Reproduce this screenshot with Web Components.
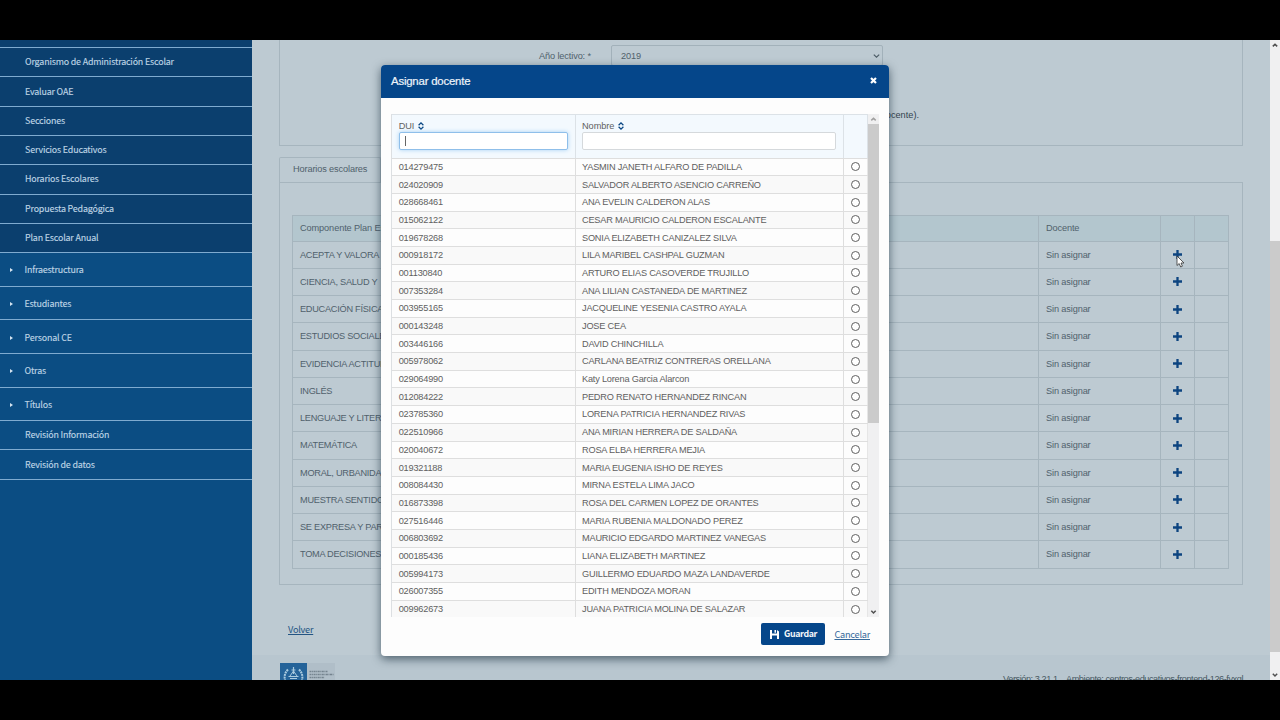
<!DOCTYPE html>
<html lang="es">
<head>
<meta charset="utf-8">
<title>Asignar docente</title>
<style>
  body {
    margin: 0;
    width: 1280px;
    height: 720px;
    background: #000;
    overflow: hidden;
    font-family: "Liberation Sans", Arial, sans-serif;
    font-size: 9.2px;
    --humanist: "Noto Sans CJK SC", "Noto Sans", sans-serif;
    --blue: #05468a;
    --line: #a6b5be;
  }
</style>
</head>
<body>
<school-app></school-app>
<script>
class SideItem extends HTMLElement {
  connectedCallback() {
    this.attachShadow({ mode: 'open' }).innerHTML = `
      <style>
        :host {
          display: flex;
          align-items: center;
          box-sizing: border-box;
          height: 29.3px;
          padding-left: 25px;
          border-bottom: 1px solid #7fabd0;
          color: #bdd3e3;
          background: #0b4d83;
          font: 8.9px/12px var(--humanist);
          letter-spacing: -.16px;
          -webkit-text-stroke: .15px #bdd3e3;
          white-space: nowrap;
        }
        :host([sub]) { background: #0b3f6e; }
        :host([parent]) { height: 33.6px; padding: 2px 0 0 10px; }
        i { display: none; }
        :host([parent]) i {
          display: block;
          width: 0;
          margin-right: 11.5px;
          border: 2.5px solid transparent;
          border-left: 3px solid #d5e4f0;
          border-right: 0;
        }
      </style>
      <i></i><slot></slot>
    `;
  }
}
customElements.define('side-item', SideItem);

class SideMenu extends HTMLElement {
  connectedCallback() {
    const sub = ['Organismo de Administración Escolar', 'Evaluar OAE', 'Secciones', 'Servicios Educativos',
      'Horarios Escolares', 'Propuesta Pedagógica', 'Plan Escolar Anual'];
    const parents = ['Infraestructura', 'Estudiantes', 'Personal CE', 'Otras', 'Títulos'];
    const last = ['Revisión Información', 'Revisión de datos'];
    this.attachShadow({ mode: 'open' }).innerHTML = `
      <style>
        :host { display: block; width: 252px; flex: none; background: #0b4d83; }
        .rest { height: 8.1px; box-sizing: border-box; background: #0b3f6e; border-bottom: 1px solid #7fabd0; }
      </style>
      <div class="rest"></div>
      ${sub.map(t => `<side-item sub>${t}</side-item>`).join('')}
      ${parents.map(t => `<side-item parent>${t}</side-item>`).join('')}
      ${last.map(t => `<side-item>${t}</side-item>`).join('')}
    `;
  }
}
customElements.define('side-menu', SideMenu);

// Vertical scrollbar; thumb geometry comes from custom properties
class ScrollBar extends HTMLElement {
  connectedCallback() {
    this.attachShadow({ mode: 'open' }).innerHTML = `
      <style>
        :host { display: flex; flex-direction: column; flex: none; background: #f0f0f1; color: #505050; }
        svg { display: block; width: 100%; height: 10px; flex: none; }
        .up { color: var(--up, #505050); }
        .thumb { margin-top: var(--thumb-top, 0); height: var(--thumb); background: #cbcbcb; }
        .space { flex: 1; }
      </style>
      <svg class="up" viewBox="0 0 10 10"><path d="M2.8 6.4 5 4.2l2.2 2.2" fill="none" stroke="currentColor" stroke-width="1.5"/></svg>
      <div class="thumb"></div>
      <div class="space"></div>
      <svg viewBox="0 0 10 10"><path d="M2.8 3.8 5 6l2.2-2.2" fill="none" stroke="currentColor" stroke-width="1.5"/></svg>
    `;
  }
}
customElements.define('scroll-bar', ScrollBar);

class FilterPanel extends HTMLElement {
  connectedCallback() {
    this.attachShadow({ mode: 'open' }).innerHTML = `
      <style>
        :host {
          display: block;
          box-sizing: border-box;
          height: 106px;
          padding-top: 5px;
          border: 1px solid var(--line);
          border-top: 0;
          color: #50616c;
        }
        .field { display: flex; align-items: center; margin-left: 259px; height: 21px; letter-spacing: -.12px; }
        label { width: 72px; }
        .select {
          display: flex;
          align-items: center;
          justify-content: space-between;
          box-sizing: border-box;
          width: 272px;
          height: 21px;
          padding: 0 2px 0 9px;
          border: 1px solid #a2b1ba;
          border-radius: 2px;
        }
        svg { width: 7px; height: 6px; }
        .note { margin-top: 43px; width: 639px; text-align: right; color: #33434e; line-height: 12px; }
      </style>
      <div class="field">
        <label>Año lectivo: *</label>
        <div class="select">2019
          <svg viewBox="0 0 7 6"><path d="M.8 1.6 3.5 4.2 6.2 1.6" fill="none" stroke="#4c5c66" stroke-width="1.2"/></svg>
        </div>
      </div>
      <div class="note">(docente).</div>
    `;
  }
}
customElements.define('filter-panel', FilterPanel);

class PlanTable extends HTMLElement {
  connectedCallback() {
    const names = ['ACEPTA Y VALORA', 'CIENCIA, SALUD Y', 'EDUCACIÓN FÍSICA', 'ESTUDIOS SOCIALES',
      'EVIDENCIA ACTITUD', 'INGLÉS', 'LENGUAJE Y LITERA', 'MATEMÁTICA', 'MORAL, URBANIDAD',
      'MUESTRA SENTIDO', 'SE EXPRESA Y PART', 'TOMA DECISIONES'];
    const plus = '<svg viewBox="0 0 9 9"><path d="M4.5 0v9M0 4.5h9" stroke="#0d4480" stroke-width="2.3"/></svg>';
    this.attachShadow({ mode: 'open' }).innerHTML = `
      <style>
        :host { display: block; border: 1px solid var(--line); border-bottom: 0; color: #50616c; letter-spacing: -.13px; }
        .row {
          display: grid;
          grid-template-columns: 746px 122px 34px 1fr;
          box-sizing: border-box;
          height: 27.25px;
          border-bottom: 1px solid var(--line);
        }
        .head { height: 25.6px; background: #b3c6ce; }
        span { display: flex; align-items: center; padding-left: 7px; border-right: 1px solid var(--line); white-space: nowrap; }
        span:first-child { letter-spacing: -.26px; }
        .head span:first-child { letter-spacing: -.1px; }
        span:nth-child(3) { padding: 0; justify-content: center; }
        span:last-child { border: 0; }
        svg { width: 9px; height: 9px; }
      </style>
      <div class="row head"><span>Componente Plan Estudio</span><span>Docente</span><span></span><span></span></div>
      ${names.map(n => `<div class="row"><span>${n}</span><span>Sin asignar</span><span>${plus}</span><span></span></div>`).join('')}
    `;
  }
}
customElements.define('plan-table', PlanTable);

class TabPanel extends HTMLElement {
  connectedCallback() {
    this.attachShadow({ mode: 'open' }).innerHTML = `
      <style>
        :host { display: block; margin-top: 11px; color: #50616c; }
        .tab {
          display: flex;
          align-items: center;
          box-sizing: border-box;
          width: 102px;
          height: 25px;
          padding: 0 0 2px 13px;
          border: 1px solid var(--line);
          border-bottom: 0;
          border-radius: 2px 2px 0 0;
          letter-spacing: -.13px;
        }
        .body {
          box-sizing: border-box;
          height: 403px;
          padding: 32px 13px 0 12px;
          border: 1px solid var(--line);
        }
      </style>
      <div class="tab">${this.getAttribute('label')}</div>
      <div class="body"><slot></slot></div>
    `;
  }
}
customElements.define('tab-panel', TabPanel);

class PageFooter extends HTMLElement {
  connectedCallback() {
    this.attachShadow({ mode: 'open' }).innerHTML = `
      <style>
        :host {
          display: flex;
          box-sizing: border-box;
          height: 60px;
          padding: 8px 27px 0 28px;
          background: #b8c6cf;
          color: #485963;
        }
        svg { width: 55px; height: 27px; flex: none; }
        .version { margin-left: auto; padding-top: 11px; letter-spacing: -.45px; line-height: 11px; white-space: pre; }
      </style>
      <svg viewBox="0 0 55 27">
        <path fill="#b0bec8" d="M27 0h28v27H27z"/>
        <path fill="#256399" d="M0 0h27v27H0z"/>
        <g fill="none" stroke="#a9cadf">
          <path d="M8 6.500Q2.500 12 6 20M19 6.500q5.500 5.500 2 13.500" stroke-width="2" stroke-dasharray="2 .7"/>
          <path d="M13.500 4v7M11.500 7h4M8.500 13.500h10M10 15.500h7" stroke-width="1.200"/>
          <path d="m10 13 3.500-5 3.500 5" />
        </g>
        <path d="M29.500 8.500h18M29.500 11.500h24M29.500 14.500h15" stroke="#74838e" stroke-width="1.300" stroke-dasharray="2 .6 1 .5"/>
      </svg>
      <div class="version">Versión: 3.21.1 _ Ambiente: centros-educativos-frontend-126-fvxgl</div>
    `;
  }
}
customElements.define('page-footer', PageFooter);

class TeacherList extends HTMLElement {
  connectedCallback() {
    const rows = [
      ['014279475', 'YASMIN JANETH ALFARO DE PADILLA'],
      ['024020909', 'SALVADOR ALBERTO ASENCIO CARREÑO'],
      ['028668461', 'ANA EVELIN CALDERON ALAS'],
      ['015062122', 'CESAR MAURICIO CALDERON ESCALANTE'],
      ['019678268', 'SONIA ELIZABETH CANIZALEZ SILVA'],
      ['000918172', 'LILA MARIBEL CASHPAL GUZMAN'],
      ['001130840', 'ARTURO ELIAS CASOVERDE TRUJILLO'],
      ['007353284', 'ANA LILIAN CASTANEDA DE MARTINEZ'],
      ['003955165', 'JACQUELINE YESENIA CASTRO AYALA'],
      ['000143248', 'JOSE CEA'],
      ['003446166', 'DAVID CHINCHILLA'],
      ['005978062', 'CARLANA BEATRIZ CONTRERAS ORELLANA'],
      ['029064990', 'Katy Lorena Garcia Alarcon'],
      ['012084222', 'PEDRO RENATO HERNANDEZ RINCAN'],
      ['023785360', 'LORENA PATRICIA HERNANDEZ RIVAS'],
      ['022510966', 'ANA MIRIAN HERRERA DE SALDAÑA'],
      ['020040672', 'ROSA ELBA HERRERA MEJIA'],
      ['019321188', 'MARIA EUGENIA ISHO DE REYES'],
      ['008084430', 'MIRNA ESTELA LIMA JACO'],
      ['016873398', 'ROSA DEL CARMEN LOPEZ DE ORANTES'],
      ['027516446', 'MARIA RUBENIA MALDONADO PEREZ'],
      ['006803692', 'MAURICIO EDGARDO MARTINEZ VANEGAS'],
      ['000185436', 'LIANA ELIZABETH MARTINEZ'],
      ['005994173', 'GUILLERMO EDUARDO MAZA LANDAVERDE'],
      ['026007355', 'EDITH MENDOZA MORAN'],
      ['009962673', 'JUANA PATRICIA MOLINA DE SALAZAR']
    ];
    const sort = '<svg viewBox="0 0 6 8"><path d="M.6 3.200 3 .9l2.400 2.300M.6 4.800 3 7.100l2.400-2.300" fill="none" stroke="#0d4a86" stroke-width="1.300"/></svg>';
    this.attachShadow({ mode: 'open' }).innerHTML = `
      <style>
        :host { display: flex; height: 503px; overflow: hidden; color: #606060; letter-spacing: -.2px; }
        .grid { flex: 1; border-left: 1px solid #dcdfe2; }
        .row {
          display: grid;
          grid-template-columns: 184px 268px 1fr;
          box-sizing: border-box;
          height: 17.7px;
          border-bottom: 1px solid #dedede;
        }
        .row:nth-child(odd) { background: #f9f9f9; }
        .row span { display: flex; align-items: center; padding: 0 7px 0 6.7px; border-right: 1px solid #dedede; white-space: nowrap; }
        .row span:nth-child(2) { padding-left: 6px; }
        .row span:last-child { padding: 0; justify-content: center; border-color: #e6e6e6; }
        .row.head { height: 44.5px; background: #f3f9fe; border-top: 1px solid #dce2e7; }
        .row.head span { flex-direction: column; align-items: stretch; justify-content: flex-start; padding-top: 6px; border-color: #dce2e7; }
        b { font-weight: normal; letter-spacing: -.05px; line-height: 11px; height: 11px; }
        svg { width: 6px; height: 8px; margin-left: 4px; vertical-align: -1px; }
        .input {
          box-sizing: border-box;
          height: 18px;
          padding: 3px 5px;
          border: 1px solid #d5d9dc;
          border-radius: 2px;
          background: #fff;
        }
        .input.focus { border-color: #8fbfea; box-shadow: 0 0 4px #a5d2f5; }
        .input.focus::before { content: ""; display: block; width: 1px; height: 10px; background: #666; }
        i { width: 7px; height: 7px; border: 1px solid #606060; border-radius: 50%; background: #fff; }
        scroll-bar { width: 11px; --thumb: 299px; --up: #a0a0a0; }
      </style>
      <div class="grid">
        <div class="row head">
          <span><b>DUI${sort}</b><div class="input focus"></div></span>
          <span><b>Nombre${sort}</b><div class="input"></div></span>
          <span></span>
        </div>
        ${rows.map(r => `<div class="row"><span>${r[0]}</span><span>${r[1]}</span><span><i></i></span></div>`).join('')}
      </div>
      <scroll-bar></scroll-bar>
    `;
  }
}
customElements.define('teacher-list', TeacherList);

class ModalDialog extends HTMLElement {
  connectedCallback() {
    this.attachShadow({ mode: 'open' }).innerHTML = `
      <style>
        :host {
          display: block;
          box-sizing: border-box;
          background: #fdfdfd;
          border-radius: 4px;
          overflow: hidden;
          box-shadow: 0 3px 10px rgba(20, 40, 55, .65);
        }
        header {
          display: flex;
          align-items: center;
          justify-content: space-between;
          box-sizing: border-box;
          height: 33px;
          padding: 0 12.5px 2px 10px;
          background: var(--blue);
          color: #eef4fa;
          font-size: 11.4px;
          letter-spacing: -.2px;
          -webkit-text-stroke: .2px #eef4fa;
        }
        header svg { width: 7px; height: 7px; }
        .content { padding: 16px 10px 0; }
        footer {
          display: flex;
          align-items: center;
          justify-content: flex-end;
          height: 22px;
          padding: 6px 19px 0 0;
          font: 9.2px/12px var(--humanist);
          letter-spacing: -.25px;
        }
        .save {
          display: flex;
          align-items: center;
          box-sizing: border-box;
          width: 64px;
          height: 22px;
          padding-left: 9px;
          margin-right: 9.5px;
          border-radius: 2px;
          background: var(--blue);
          color: #f2f6fa;
          font-size: 8.8px;
          font-weight: bold;
          letter-spacing: -.35px;
        }
        .save svg { width: 9px; height: 9px; margin-right: 5px; }
        a { color: #376a9b; text-decoration: underline; }
      </style>
      <header>
        <span>${this.getAttribute('heading')}</span>
        <svg viewBox="0 0 7 7"><path d="m1 1 5 5M6 1 1 6" stroke="#fff" stroke-width="2.200"/></svg>
      </header>
      <div class="content"><slot></slot></div>
      <footer>
        <div class="save">
          <svg viewBox="0 0 9 9"><path fill="#fff" fill-rule="evenodd" d="M0 0h2v3.500h5V0l2 1.500V9H7V5.500H2V9H0zM4.500 0H6v2.700H4.500z"/></svg>
          <span>Guardar</span>
        </div>
        <a>Cancelar</a>
      </footer>
    `;
  }
}
customElements.define('modal-dialog', ModalDialog);

class SchoolApp extends HTMLElement {
  connectedCallback() {
    this.attachShadow({ mode: 'open' }).innerHTML = `
      <style>
        :host { display: block; padding-top: 40px; }
        .screen { display: flex; position: relative; height: 640px; overflow: hidden; background: #bdcad2; }
        main { display: flex; flex-direction: column; flex: 1; }
        .page { height: 615px; flex: none; box-sizing: border-box; padding: 0 27px; }
        .back { display: inline-block; margin: 38px 0 0 9px; font: 9.2px/13px var(--humanist); letter-spacing: -.25px; color: #245583; text-decoration: underline; }
        .screen > scroll-bar { width: 10px; --thumb-top: 191px; --thumb: 411px; }
        modal-dialog { position: absolute; left: 381px; top: 25px; width: 508px; height: 591px; }
        .pointer { position: absolute; left: 1176px; top: 215px; width: 9px; height: 13px; }
      </style>
      <div class="screen">
        <side-menu></side-menu>
        <main>
          <div class="page">
            <filter-panel></filter-panel>
            <tab-panel label="Horarios escolares"><plan-table></plan-table></tab-panel>
            <a class="back">Volver</a>
          </div>
          <page-footer></page-footer>
        </main>
        <scroll-bar></scroll-bar>
        <modal-dialog heading="Asignar docente"><teacher-list></teacher-list></modal-dialog>
        <svg class="pointer" viewBox="0 0 9 13"><path d="M1 1v9.500l2.200-2 1.500 3.500 1.700-.8L5 8h3z" fill="#fff" stroke="#333" stroke-width=".8"/></svg>
      </div>
    `;
  }
}
customElements.define('school-app', SchoolApp);
</script>
</body>
</html>
